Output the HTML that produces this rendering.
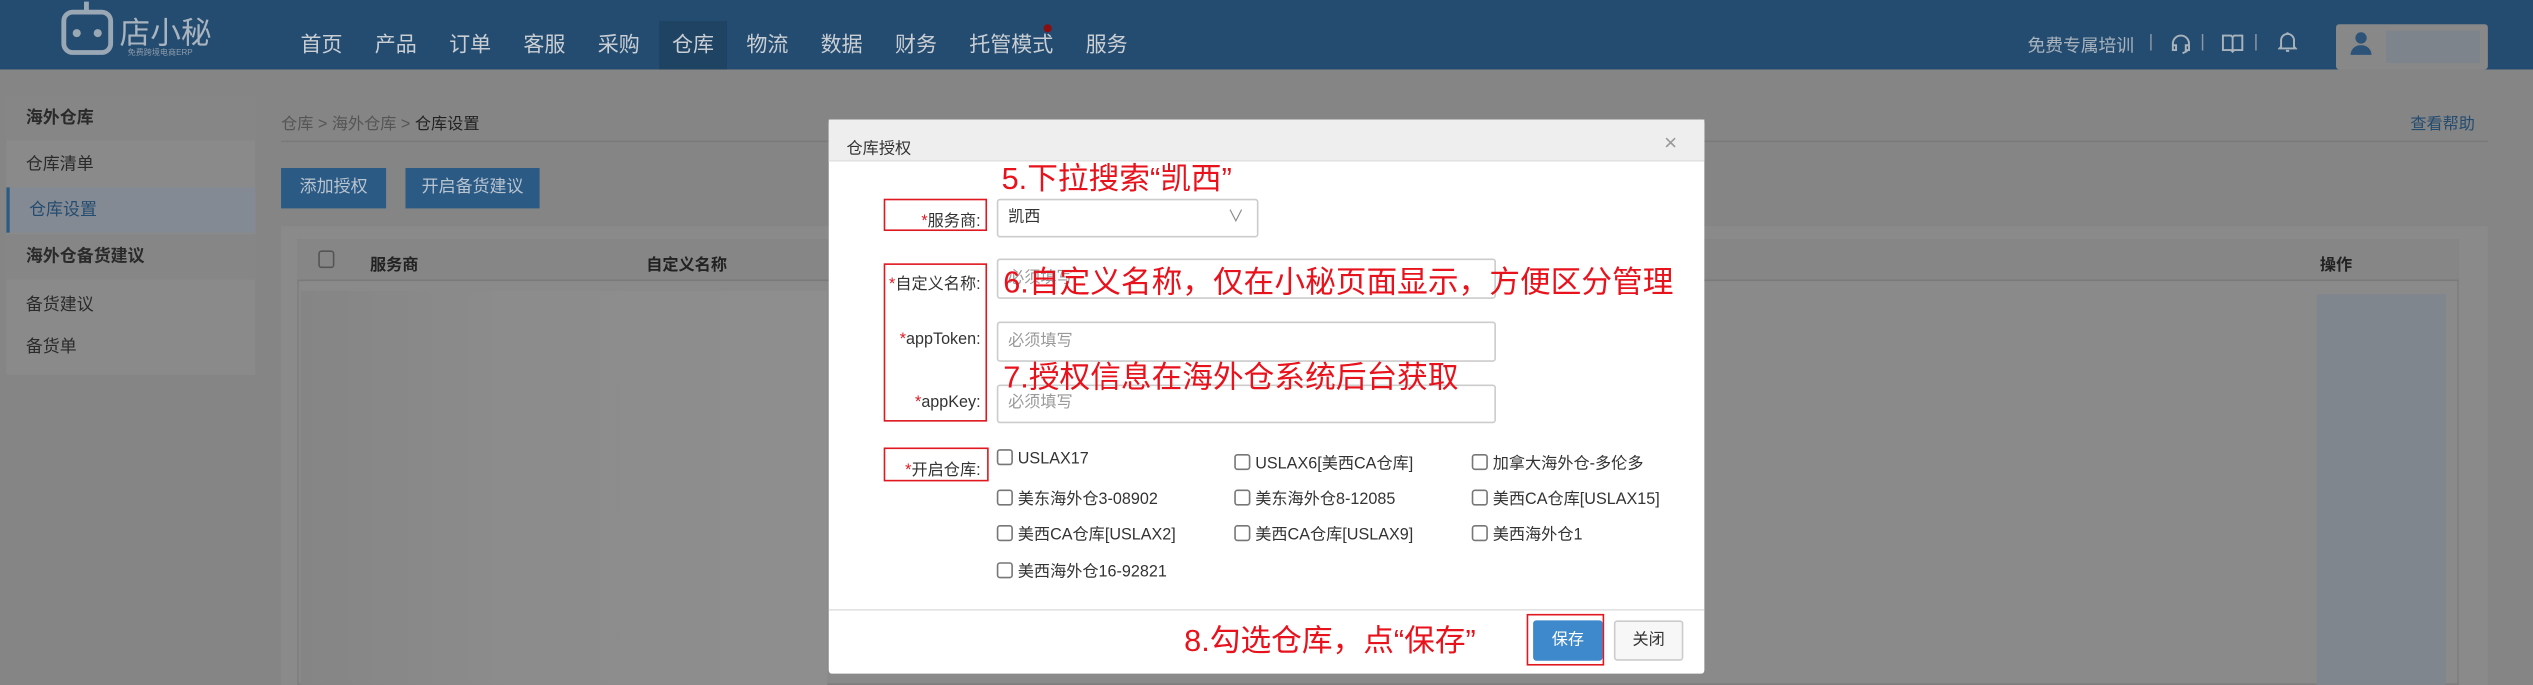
<!DOCTYPE html>
<html><head><meta charset="utf-8"><style>
*{margin:0;padding:0;box-sizing:border-box}
html,body{width:2533px;height:685px;overflow:hidden;background:#858585}
#w{position:absolute;left:0;top:0;width:1568px;height:424px;transform:scale(1.6155);transform-origin:0 0;font-family:"Liberation Sans","Noto Sans CJK SC",sans-serif;font-size:11px;color:#222}
.a{position:absolute;white-space:nowrap}
.nav{left:0;top:0;width:1568px;height:43px;background:#244c70}
.ni{top:17px;font-size:13px;color:#c9ced4}
.side{left:4px;top:59px;width:154px;height:173px;background:#8a8a8a}
.sh{background:#868686;font-weight:bold;color:#1a1a1a}
.row{left:0;width:154px;height:28px;line-height:28px;padding-left:12px;font-size:10.5px;color:#2a2a2a}
.btn{height:25px;line-height:25px;background:#2b5a84;color:#b8c4d0;text-align:center;font-size:10.5px}
.red{color:#e8121c;font-size:19px;font-family:"Liberation Sans","Noto Sans CJK SC",sans-serif}
.rb{border:1.5px solid #e01820}
.lbl{font-size:10px;color:#333;text-align:right;width:70px}
.lbl b{color:#e01820;font-weight:normal}
.inp{background:#fff;border:1px solid #ccc;border-radius:2px;font-size:10px;color:#999;padding-left:6px}
.cb{font-size:10px;color:#333}
.cb i{display:inline-block;width:10px;height:10px;border:1px solid #777;border-radius:2px;vertical-align:-1px;margin-right:3px}
</style></head><body><div id="w">
<div class="a nav"></div>
<div class="a" style="left:38px;top:6px;width:32px;height:28px;border:3px solid #9aa7b4;border-radius:7px"></div>
<div class="a" style="left:52px;top:1px;width:3px;height:6px;background:#9aa7b4"></div>
<div class="a" style="left:45px;top:18px;width:5px;height:5px;border-radius:50%;background:#9aa7b4"></div>
<div class="a" style="left:58px;top:18px;width:5px;height:5px;border-radius:50%;background:#9aa7b4"></div>
<div class="a" style="left:74px;top:6px;font-size:19px;color:#a9b4bf">店小秘</div>
<div class="a" style="left:79px;top:29px;font-size:5px;color:#8f9cab">免费跨境电商ERP</div>
<div class="a" style="left:408px;top:13px;width:42px;height:30px;background:#1f4363"></div>
<div class="a ni" style="left:186px">首页</div><div class="a ni" style="left:232px">产品</div><div class="a ni" style="left:278px">订单</div><div class="a ni" style="left:324px">客服</div><div class="a ni" style="left:370px">采购</div><div class="a ni" style="left:416px">仓库</div><div class="a ni" style="left:462px">物流</div><div class="a ni" style="left:508px">数据</div><div class="a ni" style="left:554px">财务</div><div class="a ni" style="left:600px">托管模式</div><div class="a ni" style="left:672px">服务</div>
<div class="a" style="left:646px;top:15px;width:5px;height:5px;border-radius:50%;background:#8a0d10"></div>
<div class="a" style="left:1255px;top:20px;font-size:11px;color:#a9b3bd">免费专属培训</div>
<div class="a" style="left:1330px;top:20px;font-size:11px;color:#8a97a5">|</div>
<div class="a" style="left:1362px;top:20px;font-size:11px;color:#8a97a5">|</div>
<div class="a" style="left:1395px;top:20px;font-size:11px;color:#8a97a5">|</div>
<svg class="a" style="left:1343px;top:20px" width="14" height="14" viewBox="0 0 14 14" fill="none" stroke="#a9b3bd" stroke-width="1.2"><path d="M2 9V7a5 5 0 0 1 10 0v2M2 8h2v3H2zM10 8h2v3h-2zM11 11.5 8 13"/></svg>
<svg class="a" style="left:1375px;top:20px" width="14" height="14" viewBox="0 0 14 14" fill="none" stroke="#a9b3bd" stroke-width="1.2"><path d="M1 2h5l1 1 1-1h5v9H8l-1 1-1-1H1zM7 3v9"/></svg>
<svg class="a" style="left:1410px;top:19px" width="12" height="14" viewBox="0 0 12 14" fill="none" stroke="#a9b3bd" stroke-width="1.2"><path d="M2 10V6a4 4 0 0 1 8 0v4l1 1H1zM6 1v1M5 12.5h2"/></svg>
<div class="a" style="left:1446px;top:15px;width:94px;height:28px;background:#888;border-radius:2px"></div>
<div class="a" style="left:1458px;top:20px;width:7px;height:7px;border-radius:50%;background:#2d5478"></div>
<div class="a" style="left:1455px;top:28px;width:13px;height:6px;border-radius:6px 6px 0 0;background:#2d5478"></div>
<div class="a" style="left:1477px;top:19px;width:58px;height:20px;background:#7d848c"></div>

<div class="a side"></div>
<div class="a row sh" style="left:4px;top:59px">海外仓库</div>
<div class="a row" style="left:4px;top:88px">仓库清单</div>
<div class="a row" style="left:4px;top:116px;background:#848a93;border-left:2px solid #2b5a84;color:#244c70">仓库设置</div>
<div class="a row sh" style="left:4px;top:145px">海外仓备货建议</div>
<div class="a row" style="left:4px;top:175px">备货建议</div>
<div class="a row" style="left:4px;top:201px">备货单</div>

<div class="a" style="left:174px;top:68px;font-size:10px;color:#555">仓库 &gt; 海外仓库 &gt; <span style="color:#222">仓库设置</span></div>
<div class="a" style="left:1492px;top:68px;font-size:10px;color:#244c70">查看帮助</div>
<div class="a" style="left:174px;top:87px;width:1366px;height:1px;background:#7a7a7a"></div>
<div class="a btn" style="left:174px;top:104px;width:65px">添加授权</div>
<div class="a btn" style="left:251px;top:104px;width:83px">开启备货建议</div>
<div class="a" style="left:174px;top:140px;width:1366px;height:284px;background:#8a8a8a"></div>
<div class="a" style="left:184px;top:148px;width:1338px;height:276px;border:1px solid #7e7e7e"></div>
<div class="a" style="left:184px;top:148px;width:1338px;height:26px;background:#868686;border-bottom:1px solid #7a7a7a"></div>
<div class="a" style="left:197px;top:155px;width:10px;height:11px;border:1px solid #555;border-radius:2px"></div>
<div class="a" style="left:229px;top:155px;font-weight:bold;font-size:10px">服务商</div>
<div class="a" style="left:400px;top:155px;font-weight:bold;font-size:10px">自定义名称</div>
<div class="a" style="left:1436px;top:155px;font-weight:bold;font-size:10px">操作</div>
<div class="a" style="left:186px;top:180px;width:326px;height:244px;background:linear-gradient(90deg,#858585,#8c8c8c 40%,#8e8e8e)"></div>
<div class="a" style="left:1434px;top:182px;width:80px;height:242px;background:#80868d"></div>

<div class="a" style="left:513px;top:74px;width:542px;height:343px;background:#fff;border-radius:2px"></div>
<div class="a" style="left:513px;top:74px;width:542px;height:26px;background:#eee;border-bottom:1px solid #e2e2e2"></div>
<div class="a" style="left:524px;top:83px;font-size:10px;color:#333">仓库授权</div>
<div class="a" style="left:1030px;top:80px;font-size:14px;color:#999">×</div>

<div class="a red" style="left:620px;top:96px">5.下拉搜索“凯西”</div>
<div class="a rb" style="left:547px;top:123px;width:64px;height:20px"></div>
<div class="a lbl" style="left:537px;top:128px"><b>*</b>服务商:</div>
<div class="a inp" style="left:617px;top:123px;width:162px;height:24px;line-height:22px;color:#333">凯西<span style="position:absolute;right:8px;color:#888">∨</span></div>

<div class="a rb" style="left:547px;top:163px;width:64px;height:98px"></div>
<div class="a lbl" style="left:537px;top:167px"><b>*</b>自定义名称:</div>
<div class="a inp" style="left:617px;top:160px;width:309px;height:25px;line-height:23px">必须填写</div>
<div class="a lbl" style="left:537px;top:205px"><b>*</b>appToken:</div>
<div class="a inp" style="left:617px;top:199px;width:309px;height:25px;line-height:23px">必须填写</div>
<div class="a lbl" style="left:537px;top:244px"><b>*</b>appKey:</div>
<div class="a inp" style="left:617px;top:238px;width:309px;height:24px;line-height:22px">必须填写</div>
<div class="a red" style="left:621px;top:160px">6.自定义名称，仅在小秘页面显示，方便区分管理</div>
<div class="a red" style="left:621px;top:219px">7.授权信息在海外仓系统后台获取</div>

<div class="a rb" style="left:547px;top:277px;width:65px;height:21px"></div>
<div class="a lbl" style="left:537px;top:282px"><b>*</b>开启仓库:</div>
<div class="a cb" style="left:617px;top:278px"><i></i>USLAX17</div>
<div class="a cb" style="left:764px;top:278px"><i></i>USLAX6[美西CA仓库]</div>
<div class="a cb" style="left:911px;top:278px"><i></i>加拿大海外仓-多伦多</div>
<div class="a cb" style="left:617px;top:300px"><i></i>美东海外仓3-08902</div>
<div class="a cb" style="left:764px;top:300px"><i></i>美东海外仓8-12085</div>
<div class="a cb" style="left:911px;top:300px"><i></i>美西CA仓库[USLAX15]</div>
<div class="a cb" style="left:617px;top:322px"><i></i>美西CA仓库[USLAX2]</div>
<div class="a cb" style="left:764px;top:322px"><i></i>美西CA仓库[USLAX9]</div>
<div class="a cb" style="left:911px;top:322px"><i></i>美西海外仓1</div>
<div class="a cb" style="left:617px;top:345px"><i></i>美西海外仓16-92821</div>

<div class="a" style="left:513px;top:377px;width:542px;height:1px;background:#e2e2e2"></div>
<div class="a red" style="left:733px;top:382px">8.勾选仓库，点“保存”</div>
<div class="a rb" style="left:945px;top:380px;width:48px;height:32px"></div>
<div class="a" style="left:949px;top:384px;width:43px;height:25px;line-height:25px;text-align:center;background:#3e88cc;color:#fff;font-size:10px;border-radius:2px">保存</div>
<div class="a" style="left:999px;top:384px;width:43px;height:25px;line-height:23px;text-align:center;background:#f7f7f7;border:1px solid #ccc;color:#333;font-size:10px;border-radius:2px">关闭</div>
</div></body></html>
